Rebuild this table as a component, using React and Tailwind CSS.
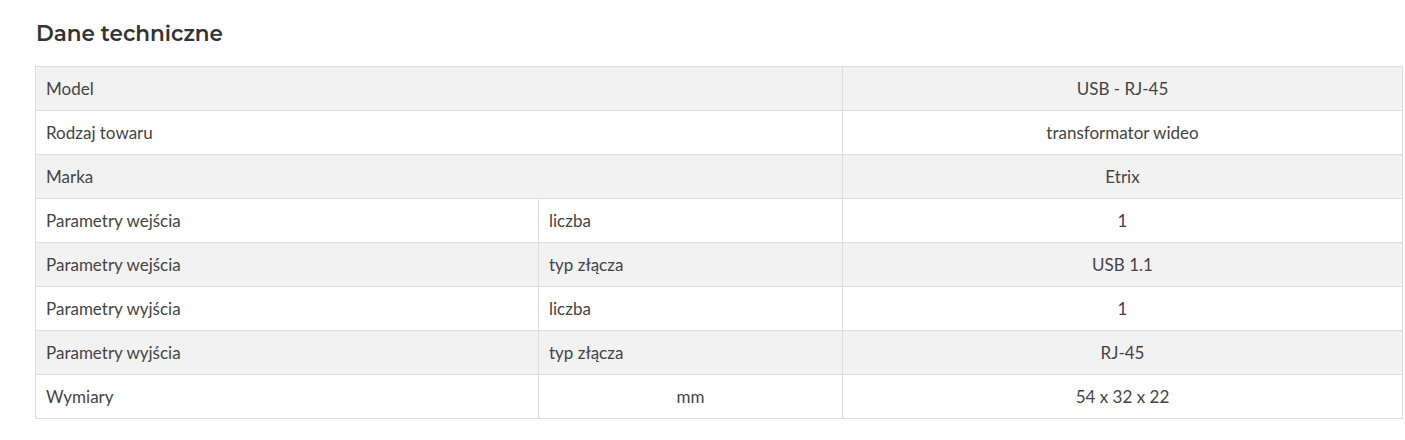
const rows = [
  { label: "Model", value: "USB - RJ-45" },
  { label: "Rodzaj towaru", value: "transformator wideo" },
  { label: "Marka", value: "Etrix" },
  { label: "Parametry wejścia", sub: "liczba", value: "1" },
  { label: "Parametry wejścia", sub: "typ złącza", value: "USB 1.1" },
  { label: "Parametry wyjścia", sub: "liczba", value: "1" },
  { label: "Parametry wyjścia", sub: "typ złącza", value: "RJ-45" },
  { label: "Wymiary", sub: "mm", value: "54 x 32 x 22", subCenter: true },
];

export default function App() {
  return (
    <div className="min-h-[440px] bg-white pl-[35px] pr-[2px] pt-[20px]">
      <h2
        className="pl-[1px] text-[21.5px] font-semibold leading-[26px] text-[#333]"
        style={{ fontFamily: "Montserrat, 'Open Sans', sans-serif" }}
      >
        Dane techniczne
      </h2>

      <table
        className="mt-[20px] w-full border-collapse border border-[#dcdcdc] text-[17px] text-[#444]"
        style={{ fontFamily: "Lato, 'Liberation Sans', sans-serif" }}
      >
        <colgroup>
          <col className="w-[503px]" />
          <col className="w-[304px]" />
          <col />
        </colgroup>
        <tbody>
          {rows.map((row, i) => (
            <tr key={i} className={i % 2 === 0 ? "bg-[#f2f2f2]" : "bg-white"}>
              {row.sub ? (
                <>
                  <td className="h-[44px] border border-[#dcdcdc] px-[10px] py-0 leading-none">{row.label}</td>
                  <td
                    className={`h-[44px] border border-[#dcdcdc] px-[10px] py-0 leading-none ${
                      row.subCenter ? "text-center" : ""
                    }`}
                  >
                    {row.sub}
                  </td>
                </>
              ) : (
                <td colSpan={2} className="h-[44px] border border-[#dcdcdc] px-[10px] py-0 leading-none">
                  {row.label}
                </td>
              )}
              <td className="h-[44px] border border-[#dcdcdc] px-[10px] py-0 text-center leading-none">
                {row.value}
              </td>
            </tr>
          ))}
        </tbody>
      </table>
    </div>
  );
}
